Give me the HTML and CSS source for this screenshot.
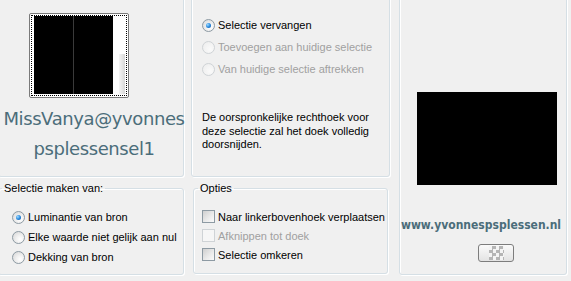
FILE: index.html
```html
<!DOCTYPE html>
<html>
<head>
<meta charset="utf-8">
<link rel="stylesheet" href="styles.css">
</head>
<body>
<div class="app">
  <div class="col col-left">
    <div class="panel preview-panel">
      <div class="thumb">
        <div class="thumb-inner">
          <div class="thumb-black"><div class="thumb-half"></div><div class="thumb-line"></div><div class="thumb-half"></div></div>
          <div class="thumb-strip"><div class="thumb-thumb"></div></div>
        </div>
      </div>
      <div class="sig">MissVanya@yvonnes<br>psplessensel1</div>
    </div>
    <fieldset class="group group-source">
      <legend>Selectie maken van:</legend>
      <div class="opts">
        <div class="opt"><span class="radio"><span class="dot"></span></span><span>Luminantie van bron</span></div>
        <div class="opt"><span class="radio"></span><span>Elke waarde niet gelijk aan nul</span></div>
        <div class="opt"><span class="radio"></span><span>Dekking van bron</span></div>
      </div>
    </fieldset>
  </div>
  <div class="col col-mid">
    <div class="panel mode-panel">
      <div class="opt mode"><span class="radio"><span class="dot"></span></span><span>Selectie vervangen</span></div>
      <div class="opt mode disabled"><span class="radio"></span><span>Toevoegen aan huidige selectie</span></div>
      <div class="opt mode disabled"><span class="radio"></span><span>Van huidige selectie aftrekken</span></div>
      <p class="desc">De oorspronkelijke rechthoek voor deze selectie zal het doek volledig doorsnijden.</p>
    </div>
    <fieldset class="group group-options">
      <legend>Opties</legend>
      <div class="opts">
        <div class="opt chk"><span class="check"></span><span>Naar linkerbovenhoek verplaatsen</span></div>
        <div class="opt chk disabled"><span class="check"></span><span>Afknippen tot doek</span></div>
        <div class="opt chk"><span class="check"></span><span>Selectie omkeren</span></div>
      </div>
    </fieldset>
  </div>
  <div class="panel result-panel">
    <div class="result-black"></div>
    <div class="site">www.yvonnespsplessen.nl</div>
    <div class="checker-btn"><span class="checker"></span></div>
  </div>
</div>
</body>
</html>
```

FILE: styles.css
```css
html, body {
  margin: 0;
  padding: 0;
  background: #f0f0f0;
  overflow: hidden;
}
body {
  font-family: "Liberation Sans", Arial, sans-serif;
  font-size: 11px;
  color: #000;
}
.app {
  display: flex;
  width: 571px;
  height: 281px;
  overflow: hidden;
}
.col {
  display: flex;
  flex-direction: column;
}
.col-left {
  width: 184px;
}
.col-mid {
  width: 214px;
}
.panel {
  box-sizing: border-box;
  border: 1px solid #d5dfe5;
  border-radius: 3px;
  box-shadow: inset 1px 1px 0 #fff, 1px 1px 0 #fff;
}
.preview-panel {
  margin: -10px 0 0 -2px;
  width: 186px;
  height: 187px;
  padding: 22px 0 0 30px;
  display: flex;
  flex-direction: column;
}
.thumb {
  box-sizing: border-box;
  width: 100px;
  height: 85px;
  border: 1px solid #7a7a7a;
  border-radius: 2px;
  background: #fff;
  padding: 1px;
}
.thumb-inner {
  box-sizing: border-box;
  height: 100%;
  border: 1px dotted #000;
  display: flex;
  padding: 0 1px 1px 2px;
}
.thumb-black {
  width: 79px;
  background: #000;
  display: flex;
}
.thumb-half {
  flex: 1;
}
.thumb-line {
  width: 1px;
  background: #3a3a3a;
}
.thumb-strip {
  flex: 1;
  display: flex;
  flex-direction: column;
  justify-content: flex-end;
  align-items: flex-end;
}
.thumb-thumb {
  width: 6px;
  height: 40px;
  background: linear-gradient(90deg, #f4f4f4, #d8d8d8);
}
.sig {
  margin: 6px 0 0 -31px;
  width: 192px;
  text-align: center;
  font-family: "DejaVu Sans", sans-serif;
  font-size: 18px;
  line-height: 30px;
  color: #4b6d7a;
  white-space: nowrap;
  letter-spacing: -0.4px;
}
.group {
  box-sizing: border-box;
  margin: 0;
  padding: 0;
  border: 1px solid #d5dfe5;
  border-radius: 3px;
  box-shadow: inset 1px 1px 0 #fff, 1px 1px 0 #fff;
  min-width: 0;
}
.group legend {
  padding: 0 2px;
  line-height: 13px;
}
.group-source {
  margin: 5px 0 0 -2px;
  width: 186px;
  height: 93px;
}
.group-source legend {
  margin-left: 3px;
}
.group-source .opts {
  padding: 12px 0 0 13px;
}
.group-source .opt {
  height: 20px;
}
.opt {
  display: flex;
  align-items: center;
  gap: 3px;
  white-space: nowrap;
}
.radio {
  box-sizing: border-box;
  width: 13px;
  height: 13px;
  border-radius: 50%;
  border: 1px solid #8d9aa3;
  background: radial-gradient(circle at 65% 65%, #ffffff 0, #f2f2f2 35%, #d4d4d4 100%);
  display: flex;
  align-items: center;
  justify-content: center;
  flex: none;
}
.dot {
  width: 5px;
  height: 5px;
  border-radius: 50%;
  background: radial-gradient(circle at 35% 35%, #9fdcff 0, #2b8be0 50%, #0a4e9a 100%);
}
.disabled {
  color: #a0a0a0;
}
.disabled .radio {
  border-color: #cfd3d6;
  background: radial-gradient(circle at 65% 65%, #fafafa, #ececec);
}
.mode-panel {
  margin: -10px 8px 0 7px;
  height: 187px;
  padding: 23px 0 0 10px;
}
.mode {
  height: 22px;
}
.desc {
  margin: 31px 0 0 0;
  width: 180px;
  line-height: 13.5px;
}
.group-options {
  margin: 5px 10px 0 9px;
  height: 92px;
}
.group-options legend {
  margin-left: 4px;
}
.group-options .opts {
  padding: 12px 0 0 8px;
}
.chk {
  height: 19px;
}
.check {
  box-sizing: border-box;
  width: 13px;
  height: 13px;
  border: 1px solid #8d9aa3;
  background: linear-gradient(135deg, #cfcfcf 0, #ececec 60%, #fafafa 100%);
  flex: none;
}
.disabled .check {
  border-color: #cfd3d6;
  background: #f6f6f6;
}
.result-panel {
  margin: -10px 0 0 1px;
  width: 168px;
  height: 285px;
  display: flex;
  flex-direction: column;
  align-items: flex-start;
  padding: 101px 0 0 17px;
}
.result-black {
  width: 140px;
  height: 93px;
  background: #000;
}
.site {
  margin: 32px 0 0 -19px;
  width: 166px;
  text-align: center;
  font-family: "DejaVu Sans Condensed", "DejaVu Sans", sans-serif;
  font-weight: bold;
  font-size: 12px;
  line-height: 16px;
  color: #4b6d7a;
  white-space: nowrap;
}
.checker-btn {
  box-sizing: border-box;
  margin: 11px 0 0 61px;
  width: 36px;
  height: 18px;
  border: 1px solid #7d7d7d;
  border-radius: 3px;
  background: linear-gradient(#fbfbfb, #e3e3e3);
  display: flex;
  align-items: center;
  justify-content: center;
}
.checker {
  width: 15px;
  height: 14px;
  background: repeating-conic-gradient(#b5b5b5 0 25%, #f4f4f4 0 50%) 0 0 / 7px 7px;
}
```
